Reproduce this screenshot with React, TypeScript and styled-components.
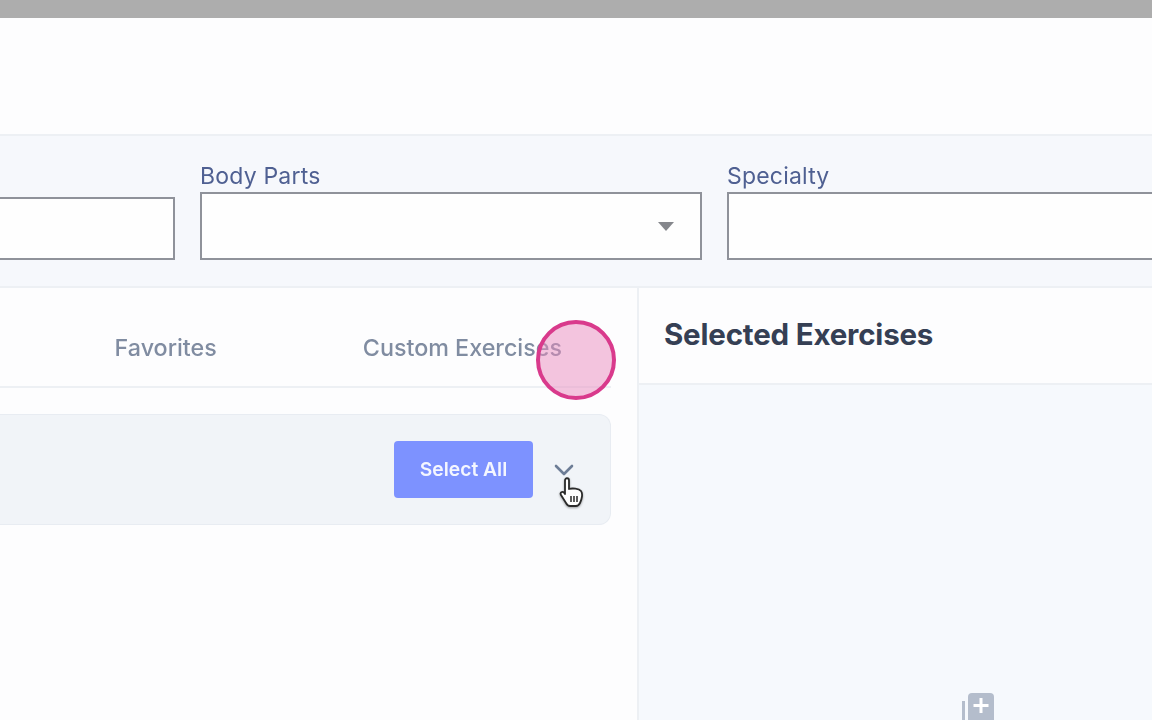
import React from 'react'
import styled, { createGlobalStyle } from 'styled-components'

const GlobalStyle = createGlobalStyle`
  html, body { margin: 0; padding: 0; height: 100%; overflow: hidden; }
  body { background: #fdfdfe; font-family: Inter, "Liberation Sans", sans-serif; }
  #root { height: 100%; }
`

const Page = styled.div`
  position: relative;
  display: flex;
  flex-direction: column;
  height: 720px;
  overflow: hidden;
  filter: blur(0.35px);
`

const TopBar = styled.div`
  height: 18px;
  flex: none;
  background: #adadad;
`

const HeaderSpace = styled.div`
  height: 116px;
  flex: none;
  background: #fdfdfe;
`

const FilterBand = styled.div`
  display: flex;
  align-items: flex-end;
  gap: 25px;
  box-sizing: border-box;
  height: 154px;
  flex: none;
  padding-bottom: 26px;
  background: #f6f8fc;
  border-top: 2px solid #edf0f4;
  border-bottom: 2px solid #edf0f4;
`

const Field = styled.div<{ $width: number }>`
  display: flex;
  flex-direction: column;
  flex: none;
  width: ${p => p.$width}px;
`

const FieldLabel = styled.label`
  height: 31px;
  padding-top: 2px;
  box-sizing: border-box;
  font-size: 23px;
  line-height: 26px;
  letter-spacing: 0.2px;
  color: #4f6092;
  white-space: nowrap;
`

const Select = styled.div<{ $height: number; $open?: boolean }>`
  display: flex;
  align-items: center;
  justify-content: flex-end;
  box-sizing: border-box;
  height: ${p => p.$height}px;
  padding-right: 26px;
  background: #fefefe;
  border: 2px solid #8f929a;
  border-left-width: ${p => (p.$open ? 0 : 2)}px;
`

const Caret = styled.span`
  width: 0;
  height: 0;
  border-left: 8px solid transparent;
  border-right: 8px solid transparent;
  border-top: 9px solid #85878c;
`

const Columns = styled.div`
  display: flex;
  flex: 1;
  min-height: 0;
`

const LeftColumn = styled.section`
  box-sizing: border-box;
  width: 639px;
  flex: none;
  padding-right: 26px;
  border-right: 2px solid #edf0f4;
`

const Tabs = styled.nav`
  display: flex;
  justify-content: flex-end;
  align-items: center;
  gap: 146px;
  height: 100px;
  padding: 20px 49px 0 0;
  box-sizing: border-box;
  border-bottom: 2px solid #edf0f4;
`

const Tab = styled.span`
  font-size: 23.300px;
  font-weight: 500;
  color: #808ca1;
  white-space: nowrap;
`

const GroupCard = styled.div`
  display: flex;
  align-items: flex-start;
  justify-content: flex-end;
  gap: 22px;
  box-sizing: border-box;
  height: 111px;
  margin-top: 26px;
  padding: 26px 36px 0 0;
  background: #f1f4f8;
  border: 1px solid #e8ecf2;
  border-left: 0;
  border-radius: 0 12px 12px 0;
`

const SelectAll = styled.button`
  width: 139px;
  height: 57px;
  padding: 0 0 2px;
  margin-right: -1px;
  border: 0;
  border-radius: 4px;
  background: #7d92ff;
  color: #f4f6ff;
  font-family: inherit;
  font-size: 19.300px;
  font-weight: 600;
`

const Chevron = styled.svg`
  width: 20px;
  height: 14px;
  margin-top: 22px;
  flex: none;
  fill: none;
  stroke: #6d7d96;
  stroke-width: 2.600;
  stroke-linecap: round;
  stroke-linejoin: round;
`

const RightColumn = styled.section`
  display: flex;
  flex-direction: column;
  flex: 1;
  min-width: 0;
`

const RightHeader = styled.div`
  display: flex;
  align-items: center;
  flex: none;
  box-sizing: border-box;
  height: 97px;
  padding: 0 0 4px 25px;
  background: #fdfdfe;
  border-bottom: 2px solid #edf0f4;
`

const RightTitle = styled.h2`
  margin: 0;
  font-size: 29.500px;
  font-weight: 700;
  letter-spacing: -0.2px;
  color: #353f54;
`

const RightBody = styled.div`
  display: flex;
  flex: 1;
  min-height: 0;
  padding: 308px 0 0 323px;
  background: #f6f9fd;
`

const AddIcon = styled.svg`
  width: 34px;
  height: 34px;
  flex: none;
`

const ClickMarker = styled.div`
  position: absolute;
  left: 536px;
  top: 320px;
  box-sizing: border-box;
  width: 80px;
  height: 80px;
  border-radius: 50%;
  background: rgba(233, 140, 190, 0.5);
  border: 4px solid #d93a8c;
`

const Cursor = styled.svg`
  position: absolute;
  left: 558px;
  top: 476px;
  width: 27px;
  height: 32px;
  filter: drop-shadow(0 1px 1px rgba(0, 0, 0, 0.35));
`

export default function App() {
  return (
    <Page>
      <GlobalStyle />
      <TopBar />
      <HeaderSpace />
      <FilterBand>
        <Field $width={175}>
          <Select $height={63} $open />
        </Field>
        <Field $width={502}>
          <FieldLabel>Body Parts</FieldLabel>
          <Select $height={68}>
            <Caret />
          </Select>
        </Field>
        <Field $width={500}>
          <FieldLabel>Specialty</FieldLabel>
          <Select $height={68} />
        </Field>
      </FilterBand>
      <Columns>
        <LeftColumn>
          <Tabs>
            <Tab>Favorites</Tab>
            <Tab>Custom Exercises</Tab>
          </Tabs>
          <GroupCard>
            <SelectAll>Select All</SelectAll>
            <Chevron viewBox="0 0 20 14">
              <path d="M2 3l8 8 8-8" />
            </Chevron>
          </GroupCard>
        </LeftColumn>
        <RightColumn>
          <RightHeader>
            <RightTitle>Selected Exercises</RightTitle>
          </RightHeader>
          <RightBody>
            <AddIcon viewBox="0 0 34 34">
              <rect x="0" y="8" width="3" height="26" fill="#b4bdcc" />
              <rect x="6" y="0" width="26" height="34" rx="4" fill="#b4bdcc" />
              <path d="M19 5v15M11.500 12.500h15" stroke="#fff" strokeWidth="3" fill="none" />
            </AddIcon>
          </RightBody>
        </RightColumn>
      </Columns>
      <ClickMarker />
      <Cursor viewBox="0 0 27 32">
        <path
          d="M7 4.500c0-3 4-3 4 0V13c3-1 10-.5 12 2 2 2.500 1 8-1 12-1 2-2 3-4 3h-6c-2 0-3-1-4-3l-5-8c-1.500-2.500 1.500-4 3-2.500l1 1.500z"
          fill="#fff"
          stroke="#2a2a2a"
          strokeWidth="1.800"
          strokeLinejoin="round"
        />
        <path d="M13 20v6M16 20v6M19 20v6" stroke="#2a2a2a" strokeWidth="1.500" fill="none" />
      </Cursor>
    </Page>
  )
}
